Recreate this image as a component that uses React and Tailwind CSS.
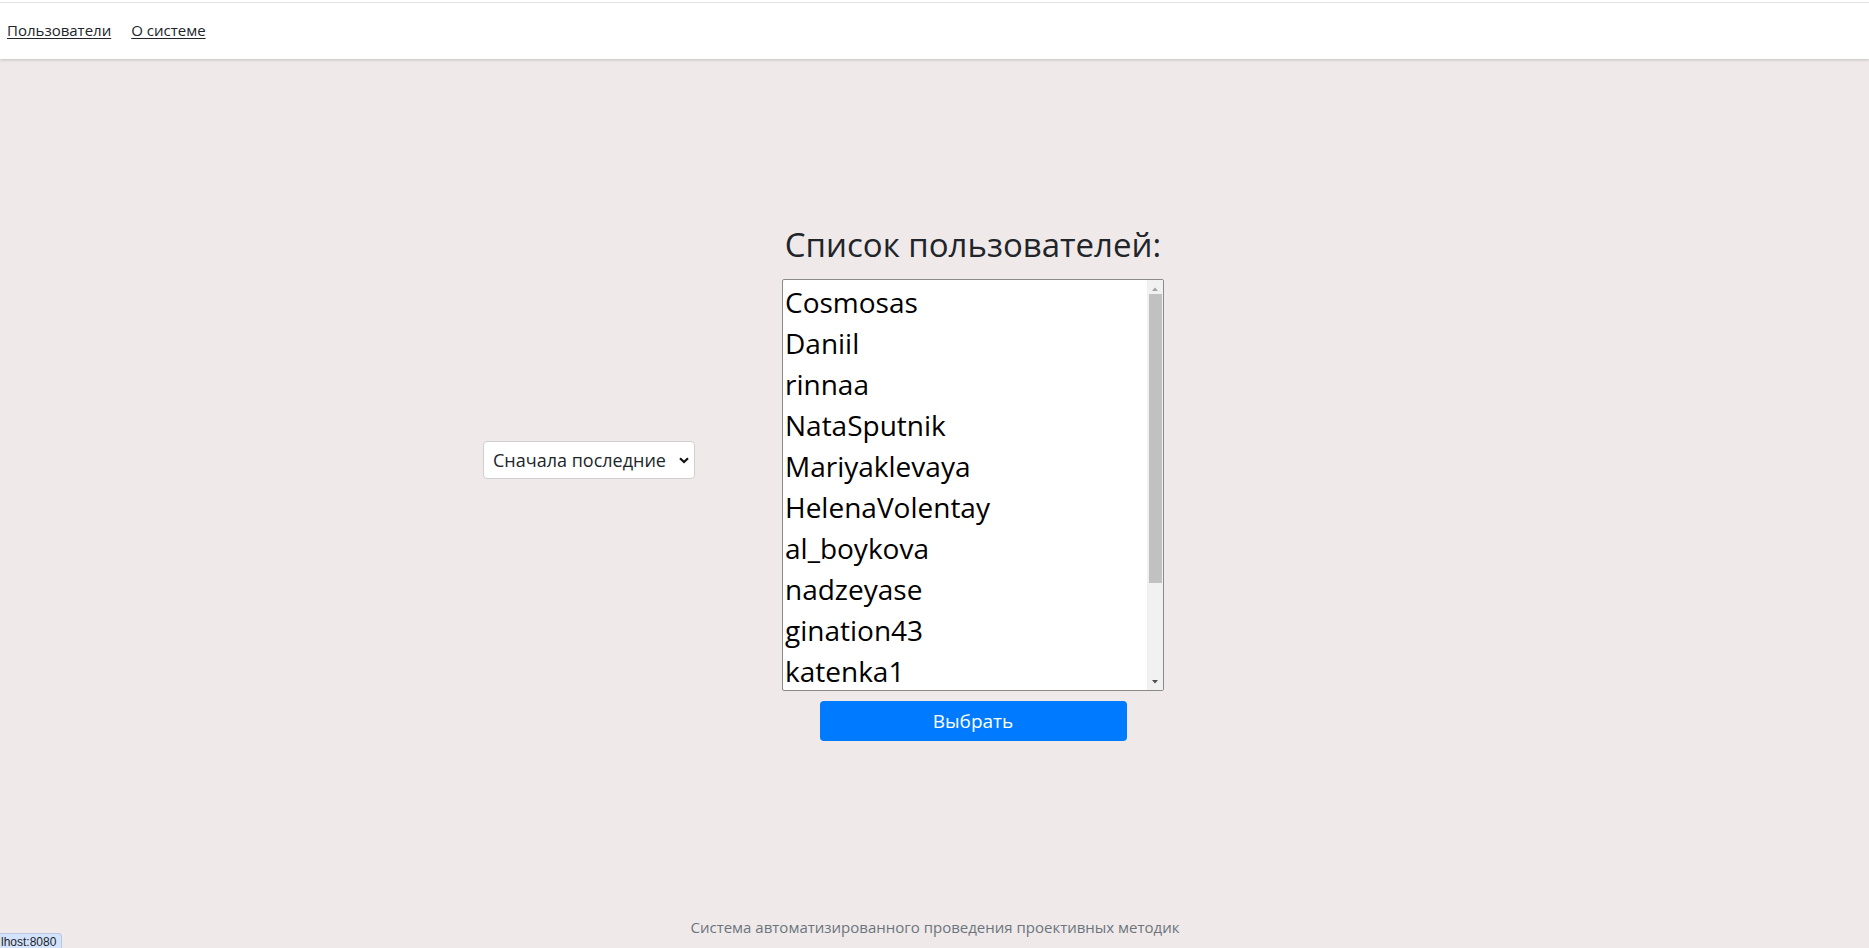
import React from 'react';

const users = [
  'Cosmosas',
  'Daniil',
  'rinnaa',
  'NataSputnik',
  'Mariyaklevaya',
  'HelenaVolentay',
  'al_boykova',
  'nadzeyase',
  'gination43',
  'katenka1',
];

const font = { fontFamily: '"Open Sans", "Noto Sans", sans-serif' };

function Header() {
  return (
    <header className="bg-white pt-[2px] shadow-[0_1px_3px_rgba(0,0,0,0.18)] relative z-10">
      <div className="border-t border-[#e2e2e2] h-[57px] flex items-center gap-[20px] pl-[7px] pb-[2px] text-[15px] text-[#212529]">
        <a href="#" className="underline underline-offset-2">Пользователи</a>
        <a href="#" className="underline underline-offset-2">О системе</a>
      </div>
    </header>
  );
}

function SortSelect() {
  return (
    <div className="w-[212px] h-[38px] bg-white border border-[#cfcfcf] rounded-[4px] flex items-center pl-[9px] pr-[5px] text-[18px] text-[#212529] mt-[216px]">
      <span className="flex-1 leading-none whitespace-nowrap">Сначала последние</span>
      <svg width="10" height="7" viewBox="0 0 10 7" className="mt-[1px] shrink-0">
        <path d="M1 1.2 L5 5 L9 1.2" fill="none" stroke="#111" strokeWidth="2.2" />
      </svg>
    </div>
  );
}

function UserList() {
  return (
    <div className="w-[382px] h-[412px] bg-white border border-[#8a8a8a] rounded-[2px] flex overflow-hidden">
      <div className="flex-1 flex flex-col pl-[2px]">
        {users.map((u) => (
          <div key={u} className="h-[41px] leading-[44px] text-[28px] text-black whitespace-nowrap">
            {u}
          </div>
        ))}
      </div>
      <div className="w-[16px] bg-[#f1f1f1] flex flex-col items-center">
        <svg width="8" height="14" viewBox="0 0 8 14" className="shrink-0">
          <path d="M1 11 L4 7.5 L7 11 Z" fill="#a3a3a3" />
        </svg>
        <div className="w-[13px] h-[289px] bg-[#c1c1c1]" />
        <div className="flex-1" />
        <svg width="8" height="14" viewBox="0 0 8 14" className="shrink-0">
          <path d="M1 4 L4 7.5 L7 4 Z" fill="#505050" />
        </svg>
      </div>
    </div>
  );
}

export default function App() {
  return (
    <div className="relative h-[948px] bg-[#efe9e9] flex flex-col overflow-hidden" style={font}>
      <Header />

      <main className="flex-1 flex items-start pl-[483px] pt-[166px]">
        <SortSelect />
        <div className="ml-[87px] flex flex-col items-center">
          <h3 className="text-[33px] leading-[40px] text-[#212529] mb-[14px] whitespace-nowrap">
            Список пользователей:
          </h3>
          <UserList />
          <button className="mt-[10px] w-[307px] h-[40px] bg-[#007bff] rounded-[4px] text-white text-[19px] leading-none flex items-center justify-center">
            Выбрать
          </button>
        </div>
      </main>

      <footer className="h-[31px] flex justify-center text-[15px] text-[#6c757d] pl-[1px]">
        <span className="leading-[20px]">Система автоматизированного проведения проективных методик</span>
      </footer>

      <div className="absolute left-0 bottom-0 w-[62px] h-[15px] bg-[#d3e3fd] border-t border-r border-[#b9c7e0] rounded-tr-[4px] flex items-start pl-[1px]">
        <span className="text-[12px] leading-[16px] text-[#1f1f1f] whitespace-nowrap" style={{ fontFamily: '"Liberation Sans", sans-serif' }}>
          lhost:8080
        </span>
      </div>
    </div>
  );
}
